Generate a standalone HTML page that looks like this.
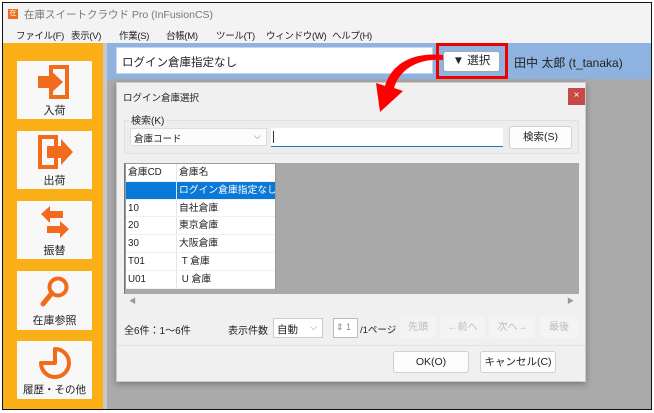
<!DOCTYPE html>
<html><head><meta charset="utf-8"><style>
*{margin:0;padding:0;box-sizing:border-box}
body{width:654px;height:413px;overflow:hidden;background:#fff;font-family:"Liberation Sans","Noto Sans CJK JP",sans-serif;font-size:11px;color:#222;position:relative}
.a{position:absolute}
.frame{left:2px;top:2px;width:650px;height:408px;border:1.5px solid #111}
.btn{background:#fdfdfd;border:1px solid #d0d0d0;border-radius:3px;text-align:center}
.side{background:#f8f8f8;text-align:center;font-size:11px;color:#222}
.dis{color:#bbb;background:#f4f4f4;text-align:center;font-size:10px;border-radius:2px}
.m{font-size:9.5px;letter-spacing:-0.3px;white-space:nowrap}
.r{height:17.8px;line-height:17px;font-size:9.8px;border-bottom:1px solid #f0f0f0;white-space:nowrap;display:flex}
.r span{display:block;overflow:hidden;padding-left:2px}
.r span:first-child{width:51px;border-right:1px solid #e6e6e6}
.r span:last-child{width:98px}
</style></head><body>
<div class="a" style="left:3px;top:3px;width:648px;height:40px;background:#f3f3f3"></div>
<div class="a" style="left:8px;top:9px;width:10px;height:10px;background:#f26b1d;color:#fff;font-size:7px;line-height:10px;text-align:center">在</div>
<div class="a" style="left:24px;top:7px;color:#777;font-size:10.5px">在庫スイートクラウド Pro (InFusionCS)</div>
<div class="a m" style="left:16px;top:28px">ファイル(F)</div>
<div class="a m" style="left:71px;top:28px">表示(V)</div>
<div class="a m" style="left:119px;top:28px">作業(S)</div>
<div class="a m" style="left:166px;top:28px">台帳(M)</div>
<div class="a m" style="left:216px;top:28px">ツール(T)</div>
<div class="a m" style="left:266px;top:28px">ウィンドウ(W)</div>
<div class="a m" style="left:332px;top:28px">ヘルプ(H)</div>
<div class="a" style="left:3px;top:43px;width:100px;height:366px;background:#fbaf17"></div>
<div class="a" style="left:103px;top:43px;width:4px;height:366px;background:#c8c8c8"></div>
<div class="a side" style="left:17px;top:61px;width:75px;height:58px">
<svg width="40" height="36" style="margin-top:4px" viewBox="0 0 40 36"><rect x="16" y="2" width="16" height="30" fill="none" stroke="#f26b1d" stroke-width="4"/><path d="M3 11h11V4l14 13-14 13v-7H3z" fill="#f26b1d"/></svg><div style="margin-top:-2px">入荷</div></div>
<div class="a side" style="left:17px;top:131px;width:75px;height:58px">
<svg width="40" height="36" style="margin-top:4px" viewBox="0 0 40 36"><rect x="5" y="2" width="16" height="30" fill="none" stroke="#f26b1d" stroke-width="4"/><path d="M12 11h14V4l12 13-12 13v-7H12z" fill="#f26b1d"/></svg><div style="margin-top:-2px">出荷</div></div>
<div class="a side" style="left:17px;top:201px;width:75px;height:58px">
<svg width="40" height="36" style="margin-top:4px" viewBox="0 0 40 36"><path d="M6 9l9-8v5h13v7H15v5z" fill="#f26b1d"/><path d="M34 24l-9-8v5H12v7h13v5z" fill="#f26b1d"/></svg><div style="margin-top:-2px">振替</div></div>
<div class="a side" style="left:17px;top:271px;width:75px;height:59px">
<svg width="40" height="36" style="margin-top:4px" viewBox="0 0 40 36"><circle cx="23" cy="12" r="8.5" fill="none" stroke="#f26b1d" stroke-width="4"/><path d="M17 18L8 29" stroke="#f26b1d" stroke-width="5" stroke-linecap="round"/></svg><div style="margin-top:-2px">在庫参照</div></div>
<div class="a side" style="left:17px;top:341px;width:75px;height:58px">
<svg width="40" height="36" style="margin-top:4px" viewBox="0 0 40 36"><path d="M20 4A14 14 0 1 1 6 18H20z" fill="none" stroke="#f26b1d" stroke-width="4" stroke-linejoin="round"/></svg><div style="margin-top:-2px;font-size:10.5px">履歴・その他</div></div>
<div class="a" style="left:107px;top:43px;width:544px;height:366px;background:#aaa"></div>
<div class="a" style="left:107px;top:43px;width:544px;height:36px;background:#8fb3e0"></div>
<div class="a" style="left:116px;top:47px;width:317px;height:27px;background:#fff;border:1px solid #c9d6e6;font-size:11.5px;padding:6px 5px">ログイン倉庫指定なし</div>
<div class="a btn" style="left:443px;top:51px;width:57px;height:21px;line-height:19px;font-size:11.5px;border-color:#9ab">▼ 選択</div>
<div class="a" style="left:436px;top:43px;width:72px;height:36px;border:3px solid #e00"></div>
<div class="a" style="left:514px;top:54px;font-size:12px">田中 太郎 (t_tanaka)</div>
<div class="a" style="left:116px;top:82px;width:470px;height:300px;background:#f0f0f0;border:1px solid #ccc;box-shadow:0 2px 6px rgba(0,0,0,.3)"></div>
<div class="a" style="left:123px;top:90px;font-size:9.5px">ログイン倉庫選択</div>
<div class="a" style="left:568px;top:88px;width:17px;height:17px;background:#c94848;color:#fff;text-align:center;line-height:16px;font-size:10px">×</div>
<div class="a" style="left:124px;top:120px;width:455px;height:34px;border:1px solid #e0e0e0;background:#ededed"></div>
<div class="a" style="left:129px;top:112px;font-size:10px;background:#f0f0f0;padding:0 2px">検索(K)</div>
<div class="a" style="left:130px;top:128px;width:137px;height:18px;background:#fcfcfc;border:1px solid #ddd;font-size:9.5px;padding:2px 3px">倉庫コード<span style="position:absolute;right:5px;color:#888">⌵</span></div>
<div class="a" style="left:271px;top:128px;width:232px;height:19px;background:#fff;border-bottom:1.5px solid #2b72c2"><div style="margin:3px 0 0 2px;width:1px;height:12px;background:#333"></div></div>
<div class="a btn" style="left:509px;top:126px;width:63px;height:23px;line-height:21px;font-size:10.5px">検索(S)</div>
<div class="a" style="left:124px;top:163px;width:455px;height:146px;background:#a9a9a9;border-left:1px solid #777"></div>
<div class="a" style="left:125px;top:163px;width:151px;height:126px;background:#fff;border:1px solid #999">
<div class="r"><span>倉庫CD</span><span>倉庫名</span></div>
<div class="r" style="background:#0a78d7;color:#fff"><span></span><span>ログイン倉庫指定なし</span></div>
<div class="r"><span>10</span><span>自社倉庫</span></div>
<div class="r"><span>20</span><span>東京倉庫</span></div>
<div class="r"><span>30</span><span>大阪倉庫</span></div>
<div class="r"><span>T01</span><span>&nbsp;T 倉庫</span></div>
<div class="r"><span>U01</span><span>&nbsp;U 倉庫</span></div>
</div>
<div class="a" style="left:124px;top:294px;width:455px;height:16px;background:#f0f0f0;color:#999;font-size:7px;line-height:16px;padding:0 5px">◀<span style="float:right">▶</span></div>
<div class="a" style="left:124px;top:322px;font-size:10px">全6件：1〜6件</div>
<div class="a" style="left:228px;top:322px;font-size:10px">表示件数</div>
<div class="a" style="left:273px;top:318px;width:50px;height:20px;background:#fff;border:1px solid #ccc;font-size:10.5px;padding:3px 3px">自動<span style="position:absolute;right:5px;color:#888;font-size:9px">⌵</span></div>
<div class="a" style="left:333px;top:318px;width:25px;height:20px;background:#fff;border:1px solid #bbb;font-size:9px;color:#888;padding:3px 2px">⇕ 1</div>
<div class="a" style="left:360px;top:322px;font-size:9.5px">/1ページ</div>
<div class="a dis" style="left:400px;top:317px;width:36px;height:21px;line-height:21px">先頭</div>
<div class="a dis" style="left:440px;top:317px;width:45px;height:21px;line-height:21px">←前へ</div>
<div class="a dis" style="left:490px;top:317px;width:45px;height:21px;line-height:21px">次へ→</div>
<div class="a dis" style="left:540px;top:317px;width:38px;height:21px;line-height:21px">最後</div>
<div class="a" style="left:117px;top:345px;width:468px;height:1px;background:#e2e2e2"></div>
<div class="a btn" style="left:393px;top:351px;width:76px;height:22px;line-height:20px;font-size:10.5px">OK(O)</div>
<div class="a btn" style="left:480px;top:351px;width:76px;height:22px;line-height:20px;font-size:10.5px">キャンセル(C)</div>
<svg class="a" style="left:370px;top:50px" width="80" height="65" viewBox="0 0 80 65"><path d="M73 10C50 8 30 18 24 38L33 41L10 62L6 33L15 36C22 12 45 2 73 5Z" fill="#f00"/></svg>
<div class="a frame"></div>
</body></html>
